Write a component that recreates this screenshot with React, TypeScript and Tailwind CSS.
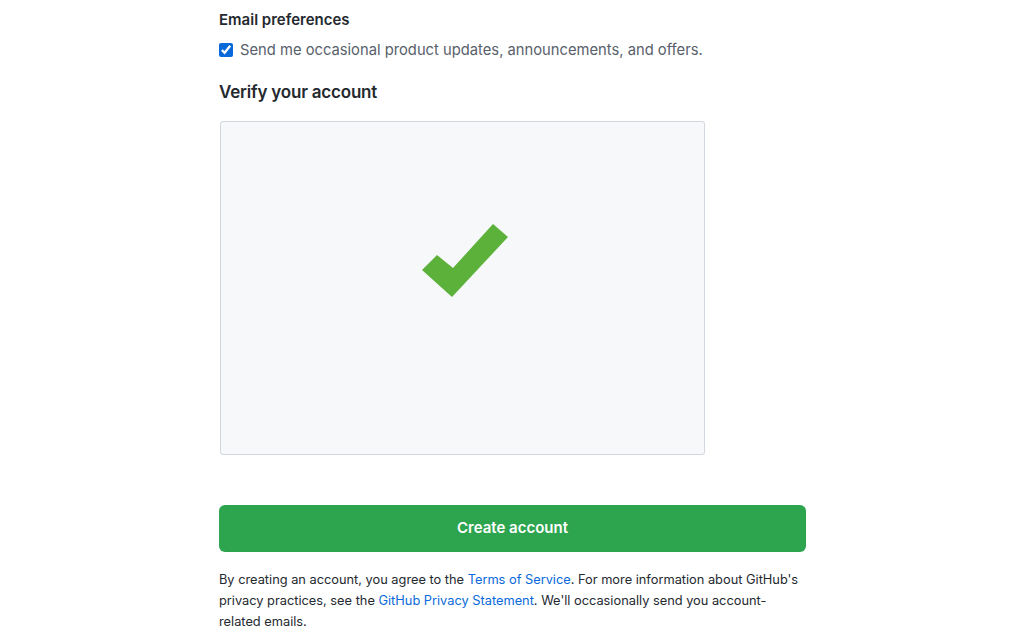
export default function App() {
  return (
    <div className="min-h-[640px] bg-white font-['Inter','Liberation_Sans',Arial,sans-serif] text-[#24292f]">
      <div className="ml-[219px] w-[587px] pt-[10px]">
        {/* Email preferences */}
        <h2 className="text-[15px] leading-[20px] font-semibold text-[#24292f]">Email preferences</h2>
        <label className="mt-[10px] flex items-center gap-[7px] text-[14.75px] leading-[20px] text-[#57606a]">
          <input type="checkbox" defaultChecked className="h-[14px] w-[14px] accent-[#0969da]" />
          <span>Send me occasional product updates, announcements, and offers.</span>
        </label>

        {/* Verify */}
        <h2 className="mt-[20px] text-[17px] leading-[24px] font-semibold tracking-[-0.2px] text-[#24292f]">Verify your account</h2>
        <div className="mt-[17px] ml-px flex h-[334px] w-[485px] items-center justify-center rounded-[3px] border border-[#d0d7de] bg-[#f6f8fa]">
          <svg width="88" height="75" viewBox="0 0 88 75" className="mb-[54px] ml-[6px]">
            <polygon points="0,46 15,31 31,44 71,0 86,13 30,73" fill="#5cb13a" />
          </svg>
        </div>

        <button className="mt-[50px] h-[47px] w-full rounded-[6px] bg-[#2da44e] text-[15px] font-semibold text-white">
          Create account
        </button>

        <p className="mt-[17px] text-[12.8px] leading-[21px] text-[#24292f]">
          By creating an account, you agree to the <a className="text-[#0969da]">Terms of Service</a>. For more information about GitHub's privacy practices, see the <a className="text-[#0969da]">GitHub Privacy Statement</a>. We'll occasionally send you account-related emails.
        </p>
      </div>
    </div>
  );
}
